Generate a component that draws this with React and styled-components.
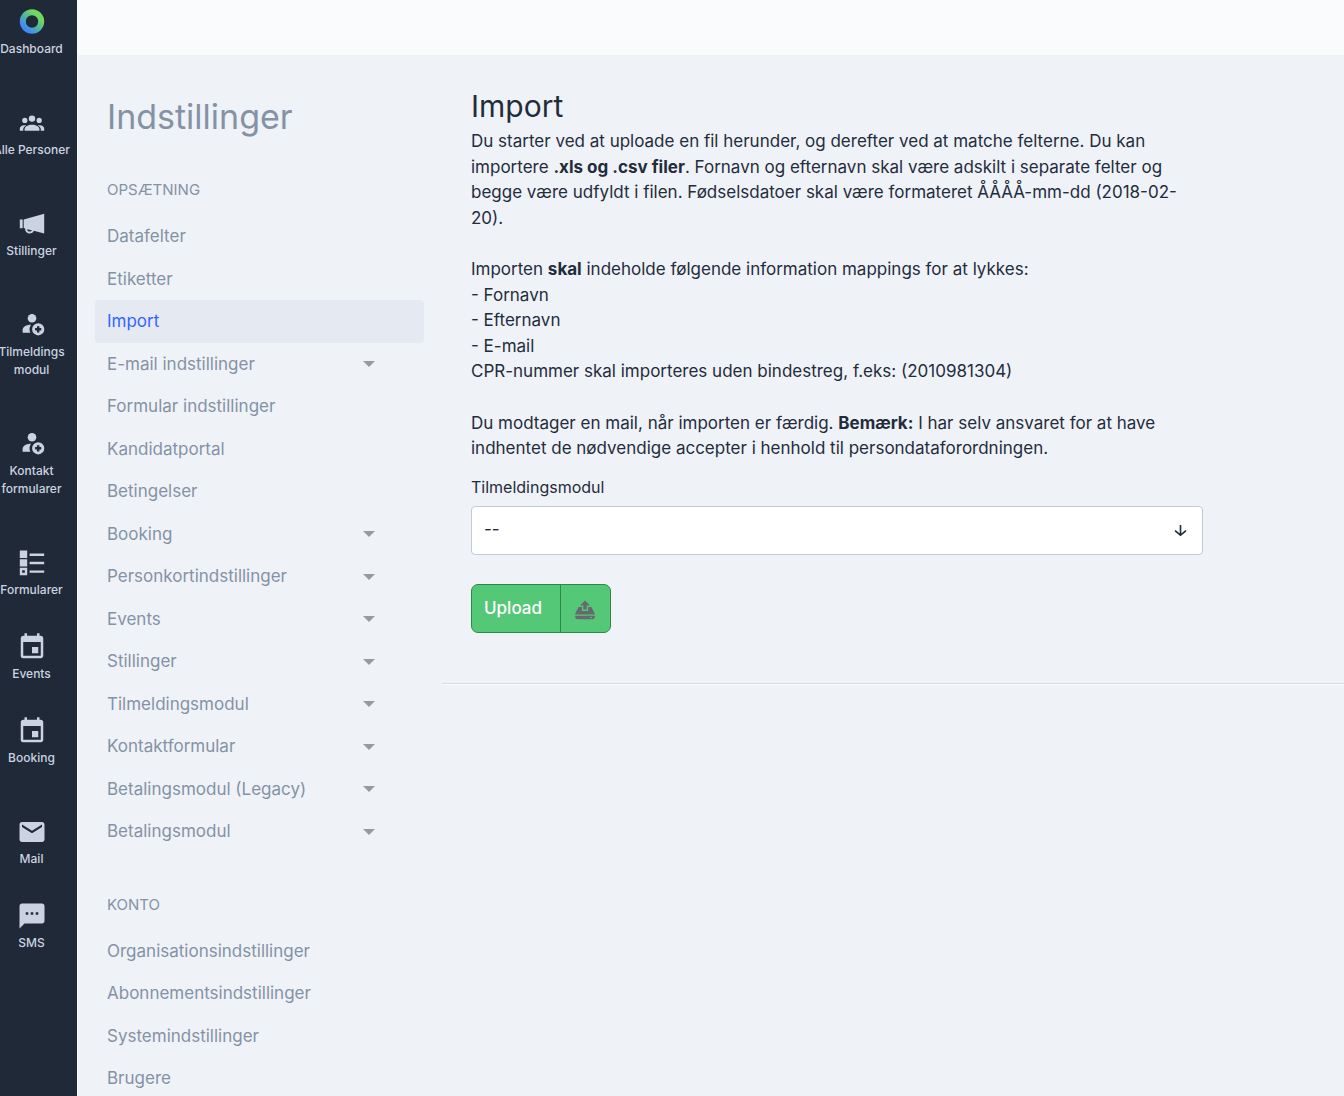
import React, { useState } from 'react';
import styled, { createGlobalStyle } from 'styled-components';
import { MdEmail, MdEvent, MdTextsms } from 'react-icons/md';

const GlobalStyle = createGlobalStyle`
  * {
    box-sizing: border-box;
  }

  body {
    margin: 0;
    background: #eff2f7;
    color: #1f2d3d;
    font-family: Inter, 'Liberation Sans', sans-serif;
    font-size: 17px;
    line-height: 1.5;
  }
`

const Page = styled.div`
  display: flex;
  height: 100vh;
  overflow: hidden;
`

const Sidebar = styled.nav`
  flex: none;
  width: 77px;
  padding: 7px 14px 0 0;
  background: #202937;
`

const SidebarLink = styled.a`
  display: flex;
  flex-direction: column;
  align-items: center;
  gap: 3px;
  margin-bottom: ${({ $spaced }) => ($spaced ? '50px' : '33px')};
  color: #cbd3e1;
  font-size: 12px;
  font-weight: 500;
  line-height: 18px;
  text-align: center;
  text-decoration: none;
  white-space: pre;

  svg {
    flex: none;
  }
`

const Content = styled.div`
  flex: 1;
  min-width: 0;
  display: flex;
  flex-direction: column;
`

const TopBar = styled.header`
  flex: none;
  height: 55px;
  background: #f9fbfd;
`

const Columns = styled.div`
  flex: 1;
  min-height: 0;
  display: flex;
  border-left: 1px solid #f9fbfd;
`

const Settings = styled.aside`
  flex: none;
  width: 364px;
  padding: 36px 18px 0 17px;
  overflow: hidden;
`

const SettingsTitle = styled.h1`
  margin: 0 0 37px;
  padding: 0 12px;
  color: #8492a6;
  font-size: 34px;
  font-weight: 400;
  line-height: 52px;
`

const GroupTitle = styled.h2`
  margin: 0 0 15px;
  padding: 0 12px;
  color: #8492a6;
  font-size: 15px;
  font-weight: 400;
  line-height: 20px;
  text-transform: uppercase;
`

const Menu = styled.ul`
  margin: 0 0 42px;
  padding: 0;
  list-style: none;
`

const MenuLink = styled.a`
  display: flex;
  align-items: center;
  justify-content: space-between;
  padding: 9px 49px 8px 12px;
  border-radius: 4px;
  background: ${({ $active }) => ($active ? '#e5e9f2' : 'transparent')};
  color: ${({ $active }) => ($active ? '#3366ff' : '#8492a6')};
  text-decoration: none;
`

const Caret = styled.span`
  border: 6px solid transparent;
  border-top-color: #9a9a9a;
  border-bottom: 0;
`

const Main = styled.main`
  flex: 1;
  min-width: 0;
`

const Section = styled.section`
  max-width: 790px;
  padding: 32px 29px 50px;
`

const Title = styled.h2`
  margin: 0;
  font-size: 30px;
  font-weight: 400;
  line-height: 38px;
`

const Text = styled.p`
  margin: 4px 0 0;

  & + & {
    margin-top: 26px;
  }

  b {
    font-weight: 700;
  }
`

const Label = styled.label`
  display: block;
  margin: 13px 0 7px;
  font-size: 16px;
  line-height: 24px;
`

const SelectBox = styled.div`
  position: relative;

  svg {
    position: absolute;
    top: 18px;
    right: 16px;
    pointer-events: none;
  }
`

const Select = styled.select`
  display: block;
  width: 100%;
  height: 49px;
  padding: 0 40px 0 12px;
  appearance: none;
  border: 1px solid #c0ccda;
  border-radius: 4px;
  background: #fff;
  color: inherit;
  font: inherit;
`

const UploadButton = styled.button`
  display: flex;
  height: 49px;
  margin-top: 29px;
  padding: 0;
  border: 1px solid #2b8a47;
  border-radius: 7px;
  background: #54c877;
  color: #fff;
  font: inherit;
  font-weight: 500;
  line-height: 47px;
  cursor: pointer;
`

const UploadText = styled.span`
  padding: 0 18px 0 12px;
`

const UploadIcon = styled.span`
  display: flex;
  align-items: center;
  justify-content: center;
  width: 50px;
  height: 47px;
  padding-top: 4px;
  border-left: 1px solid #2b8a47;
`

const Divider = styled.hr`
  margin: 0;
  border: 0;
  border-top: 1px solid #dadcde;
  border-bottom: 1px solid #fbfcfd;
`

const LogoIcon = () => (
  <svg width="30" height="30" viewBox="0 0 30 30" fill="none">
    <defs>
      <linearGradient id="ring" x1="6" y1="24" x2="22" y2="6" gradientUnits="userSpaceOnUse">
        <stop offset="0.1" stopColor="#3f86ff" />
        <stop offset="0.5" stopColor="#4fb3a5" />
        <stop offset="0.85" stopColor="#6fd85f" />
      </linearGradient>
    </defs>
    <circle cx="15" cy="14.5" r="9.2" stroke="url(#ring)" strokeWidth="6" />
  </svg>
)

const PeopleIcon = () => (
  <svg width="30" height="30" viewBox="0 0 30 30" fill="currentColor">
    <circle cx="15" cy="10.6" r="3.2" />
    <circle cx="7.8" cy="12.4" r="2.6" />
    <circle cx="22.2" cy="12.4" r="2.6" />
    <path d="M7.6 22.8v-1.6c0-2.6 3.6-4.4 7.4-4.4s7.4 1.8 7.4 4.4v1.6z" />
    <path d="M2.8 22.8v-2.4c0-1.9 1.9-3.2 4.6-3.2.7 0 1.3.1 1.8.2-2 1-3 2.4-3 4v1.4zM27.2 22.8v-2.4c0-1.9-1.9-3.2-4.6-3.2-.7 0-1.3.1-1.8.2 2 1 3 2.4 3 4v1.4z" />
  </svg>
)

const MegaphoneIcon = () => (
  <svg width="30" height="30" viewBox="0 0 30 30" fill="currentColor">
    <path d="M2.8 10.6h2.9v8.6H2.8zM6.7 10.4L27.2 4.8v19.6l-10.4-2.6c-.7 1.8-2.2 2.8-4.1 2.8-2.6 0-4.6-2-4.6-4.6v-.6l-1.4-.4zM10.1 20.2c.1 1.4 1.2 2.4 2.6 2.4 1 0 1.8-.5 2.2-1.3z" fillRule="evenodd" />
  </svg>
)

const PersonPlusIcon = () => (
  <svg width="30" height="30" viewBox="0 0 30 30" fill="currentColor">
    <circle cx="15" cy="8.2" r="4.3" />
    <path d="M5.6 22.7v-2.6c0-3.4 3.4-5.3 8.4-5.4a7.8 7.8 0 0 0-.6 8z" />
    <path d="M21.2 13.2a6.1 6.1 0 1 0 0 12.2 6.1 6.1 0 0 0 0-12.2zM20 16.2h2.4v1.9h1.9v2.4h-1.9v1.9H20v-1.9h-1.9v-2.4H20z" fillRule="evenodd" />
  </svg>
)

const FormIcon = () => (
  <svg width="30" height="30" viewBox="0 0 30 30" fill="currentColor">
    <path d="M2.8 2.6h7.4V10H2.8zM2.8 11.2h7.4v7.4H2.8z" />
    <path d="M2.8 19.8h7.4v7.4H2.8zM5.2 22.2v2.6h2.6v-2.6z" fillRule="evenodd" />
    <path d="M12.6 5.6h14.6V8H12.6zM12.6 13.8h14.6v2.4H12.6zM12.6 22.4h14.6v2.4H12.6z" />
  </svg>
)

const ArrowDownIcon = () => (
  <svg width="13" height="13" viewBox="0 0 13 13" fill="none" stroke="#1f2d3d" strokeWidth="1.6">
    <path d="M6.5 1v10M1 6.6l5.5 4.6L12 6.6" />
  </svg>
)

const DriveUploadIcon = () => (
  <svg width="20" height="20" viewBox="0 0 20 20" fill="#666a6e">
    <path d="M10 .5l5 5h-3.3v4H8.3v-4H5z" />
    <path d="M3.6 7h3.3v3.9h6.2V7h3.3l3.4 6.4v1.2H.2v-1.2z" />
    <path d="M.2 15.8h19.6v1c0 1.5-1 2.4-2.4 2.4H2.6C1.2 19.2.2 18.3.2 16.8zM15.4 17v1H17v-1z" fillRule="evenodd" />
  </svg>
)

const sidebarItems = [
  { label: 'Dashboard', icon: <LogoIcon />, spaced: true },
  { label: 'Alle Personer', icon: <PeopleIcon />, spaced: true },
  { label: 'Stillinger', icon: <MegaphoneIcon />, spaced: true },
  { label: 'Tilmeldings\nmodul', icon: <PersonPlusIcon />, spaced: true },
  { label: 'Kontakt\nformularer', icon: <PersonPlusIcon />, spaced: true },
  { label: 'Formularer', icon: <FormIcon /> },
  { label: 'Events', icon: <MdEvent size={30} /> },
  { label: 'Booking', icon: <MdEvent size={30} />, spaced: true },
  { label: 'Mail', icon: <MdEmail size={30} /> },
  { label: 'SMS', icon: <MdTextsms size={30} /> },
]

const setupItems = [
  { label: 'Datafelter' },
  { label: 'Etiketter' },
  { label: 'Import', active: true },
  { label: 'E-mail indstillinger', nested: true },
  { label: 'Formular indstillinger' },
  { label: 'Kandidatportal' },
  { label: 'Betingelser' },
  { label: 'Booking', nested: true },
  { label: 'Personkortindstillinger', nested: true },
  { label: 'Events', nested: true },
  { label: 'Stillinger', nested: true },
  { label: 'Tilmeldingsmodul', nested: true },
  { label: 'Kontaktformular', nested: true },
  { label: 'Betalingsmodul (Legacy)', nested: true },
  { label: 'Betalingsmodul', nested: true },
]

const accountItems = [
  { label: 'Organisationsindstillinger' },
  { label: 'Abonnementsindstillinger' },
  { label: 'Systemindstillinger' },
  { label: 'Brugere' },
]

function SettingsMenu({ title, items }) {
  return (
    <>
      <GroupTitle>{title}</GroupTitle>
      <Menu>
        {items.map(({ label, active, nested }) => (
          <li key={label}>
            <MenuLink href="#" $active={active}>
              {label}
              {nested && <Caret />}
            </MenuLink>
          </li>
        ))}
      </Menu>
    </>
  )
}

export default function App() {
  const [module, setModule] = useState('');

  return (
    <Page>
      <GlobalStyle />
      <Sidebar>
        {sidebarItems.map(({ label, icon, spaced }) => (
          <SidebarLink key={label} href="#" $spaced={spaced}>
            {icon}
            <span>{label}</span>
          </SidebarLink>
        ))}
      </Sidebar>
      <Content>
        <TopBar />
        <Columns>
          <Settings>
            <SettingsTitle>Indstillinger</SettingsTitle>
            <SettingsMenu title="Opsætning" items={setupItems} />
            <SettingsMenu title="Konto" items={accountItems} />
          </Settings>
          <Main>
            <Section>
              <Title>Import</Title>
              <Text>
                Du starter ved at uploade en fil herunder, og derefter ved at matche felterne. Du kan
                importere <b>.xls og .csv filer</b>. Fornavn og efternavn skal være adskilt i separate
                felter og begge være udfyldt i filen. Fødselsdatoer skal være formateret ÅÅÅÅ-mm-dd
                (2018-02-20).
              </Text>
              <Text>
                Importen <b>skal</b> indeholde følgende information mappings for at lykkes:<br />
                - Fornavn<br />
                - Efternavn<br />
                - E-mail<br />
                CPR-nummer skal importeres uden bindestreg, f.eks: (2010981304)
              </Text>
              <Text>
                Du modtager en mail, når importen er færdig. <b>Bemærk:</b> I har selv ansvaret for at
                have indhentet de nødvendige accepter i henhold til persondataforordningen.
              </Text>
              <Label htmlFor="module">Tilmeldingsmodul</Label>
              <SelectBox>
                <Select id="module" value={module} onChange={(e) => setModule(e.target.value)}>
                  <option value="">--</option>
                </Select>
                <ArrowDownIcon />
              </SelectBox>
              <UploadButton type="button">
                <UploadText>Upload</UploadText>
                <UploadIcon>
                  <DriveUploadIcon />
                </UploadIcon>
              </UploadButton>
            </Section>
            <Divider />
          </Main>
        </Columns>
      </Content>
    </Page>
  )
}
